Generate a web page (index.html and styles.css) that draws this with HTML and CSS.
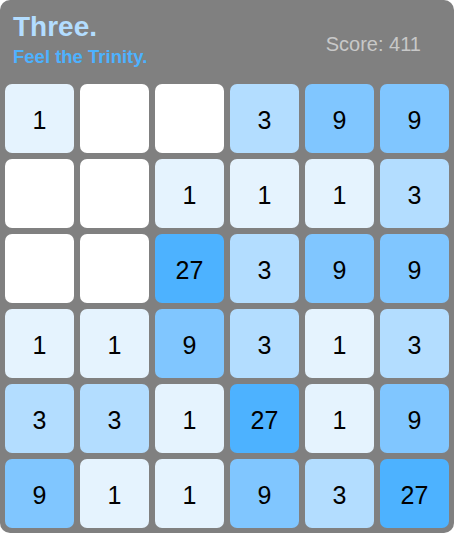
FILE: index.html
```html
<!DOCTYPE html>
<html lang="en">
<head>
  <meta charset="UTF-8" />
  <title>Three.</title>
  <link rel="stylesheet" href="styles.css">
</head>
<body>
  <div class="game">
    <div class="header">
      <div class="brand">
        <h1 class="title">Three.</h1>
        <div class="tagline">Feel the Trinity.</div>
      </div>
      <div class="score">Score: 411</div>
    </div>
    <div class="board">
      <div class="tile t1">1</div><div class="tile t0"></div><div class="tile t0"></div><div class="tile t3">3</div><div class="tile t9">9</div><div class="tile t9">9</div>
      <div class="tile t0"></div><div class="tile t0"></div><div class="tile t1">1</div><div class="tile t1">1</div><div class="tile t1">1</div><div class="tile t3">3</div>
      <div class="tile t0"></div><div class="tile t0"></div><div class="tile t27">27</div><div class="tile t3">3</div><div class="tile t9">9</div><div class="tile t9">9</div>
      <div class="tile t1">1</div><div class="tile t1">1</div><div class="tile t9">9</div><div class="tile t3">3</div><div class="tile t1">1</div><div class="tile t3">3</div>
      <div class="tile t3">3</div><div class="tile t3">3</div><div class="tile t1">1</div><div class="tile t27">27</div><div class="tile t1">1</div><div class="tile t9">9</div>
      <div class="tile t9">9</div><div class="tile t1">1</div><div class="tile t1">1</div><div class="tile t9">9</div><div class="tile t3">3</div><div class="tile t27">27</div>
    </div>
  </div>
</body>
</html>
```

FILE: styles.css
```css
body {
  margin: 0;
  background: #fff;
  font-family: "Liberation Sans", Arial, sans-serif;
}

.game {
  width: 454px;
  height: 533px;
  background: #808080;
  border-radius: 10px;
}

.header {
  display: flex;
  justify-content: space-between;
  align-items: flex-start;
  height: 84px;
  padding: 0 33px 0 13px;
  box-sizing: border-box;
}

.brand {
  padding-top: 11px;
}

.title {
  margin: 0;
  font-size: 28px;
  line-height: 32px;
  font-weight: bold;
  color: #b3ddff;
}

.tagline {
  margin-top: 3px;
  font-size: 18.5px;
  line-height: 22px;
  font-weight: bold;
  color: #4db2ff;
}

.score {
  padding-top: 32px;
  font-size: 20px;
  line-height: 24px;
  color: #c8c8c8;
}

.board {
  display: grid;
  grid-template-columns: repeat(6, 69px);
  grid-auto-rows: 69px;
  gap: 6px;
  padding: 0 5px 5px;
}

.tile {
  display: flex;
  align-items: center;
  justify-content: center;
  padding-top: 4px;
  box-sizing: border-box;
  border-radius: 7px;
  font-size: 25px;
  color: #000;
}

.t0 { background: #fff; }
.t1 { background: #e5f3fe; }
.t3 { background: #b3ddff; }
.t9 { background: #80c6ff; }
.t27 { background: #4db2ff; }
```
